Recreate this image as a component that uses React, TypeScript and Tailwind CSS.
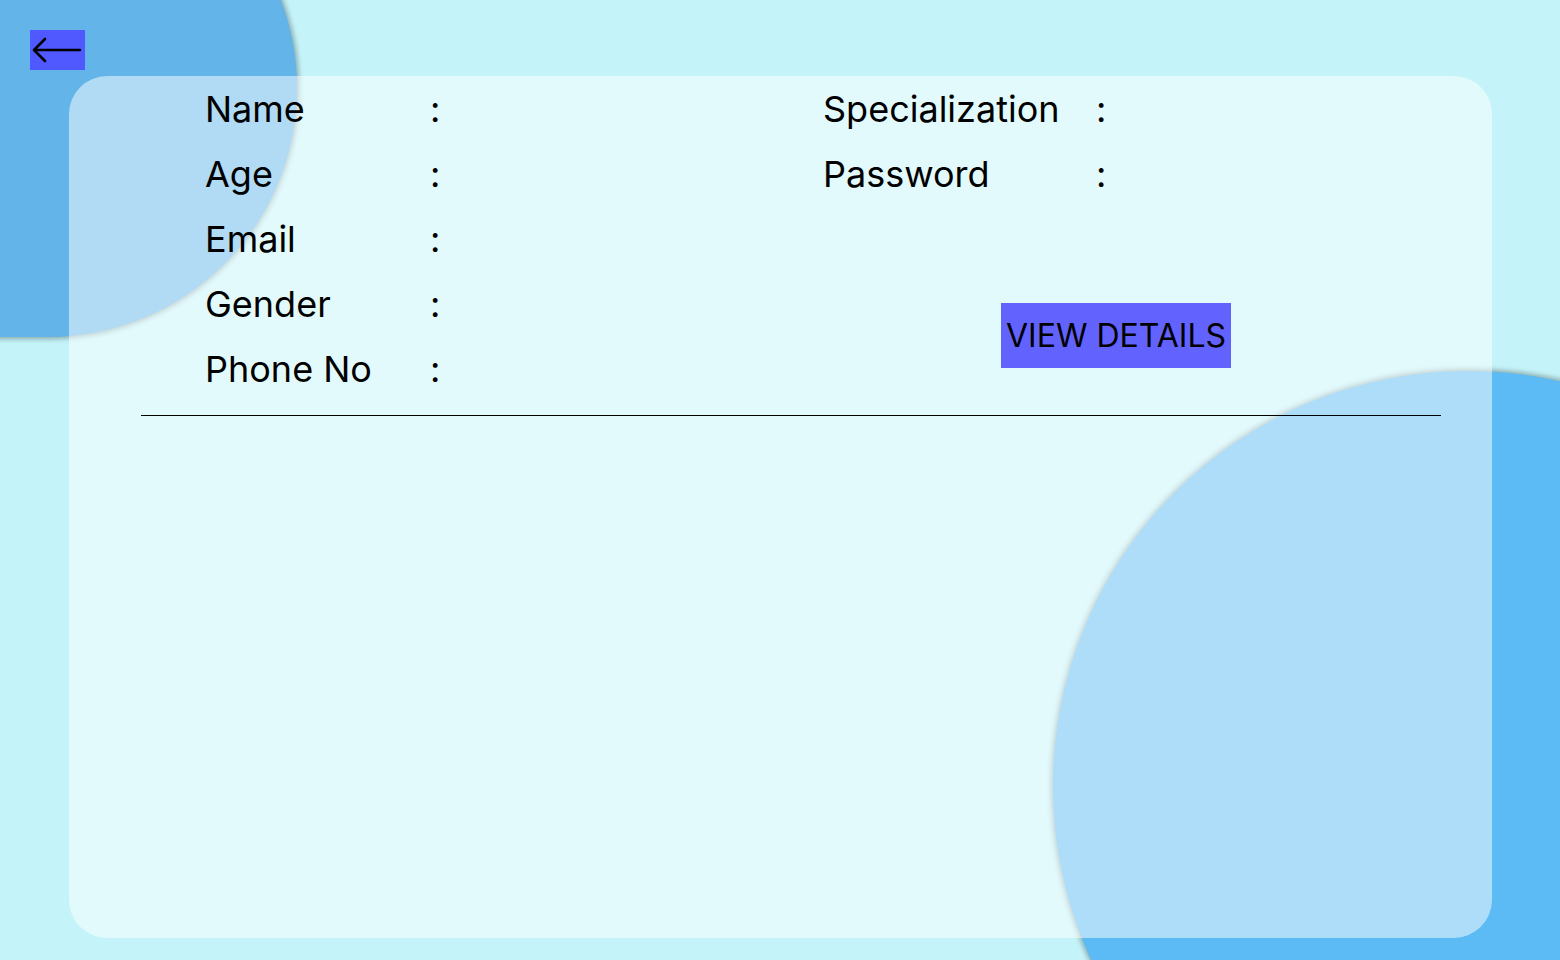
import React from "react";

const LEFT_FIELDS = ["Name", "Age", "Email", "Gender", "Phone No"];
const RIGHT_FIELDS = ["Specialization", "Password"];

function BackArrow() {
  return (
    <svg width="55" height="40" viewBox="0 0 55 40" fill="none" stroke="#000" strokeWidth="2.6" strokeLinecap="round">
      <line x1="5" y1="20" x2="50" y2="20" />
      <polyline points="15,9 4,20 15,31" strokeLinejoin="round" />
    </svg>
  );
}

function Field({ label, width }: { label: string; width: string }) {
  return (
    <div className="flex h-[65px] items-center">
      <span className={width}>{label}</span>
      <span>:</span>
    </div>
  );
}

export default function App() {
  return (
    <div
      className="relative h-[960px] w-full overflow-hidden bg-[#c4f4f9] text-black"
      style={{ fontFamily: "Inter, 'Noto Sans', sans-serif" }}
    >
      {/* background blobs */}
      <div className="absolute -left-[297px] -top-[161px] h-[498px] w-[594px] rounded-full bg-[#62b4e9] shadow-[0_0_5px_2px_rgba(0,0,0,0.3)]" />
      <div className="absolute left-[1053px] top-[371px] h-[830px] w-[830px] rounded-full bg-[#5cbaf5] shadow-[0_0_5px_2px_rgba(0,0,0,0.3)]" />

      <div className="relative flex flex-col px-[30px] pt-[30px]">
        <button type="button" className="flex h-[40px] w-[55px] items-center justify-center bg-[#5058ff]">
          <BackArrow />
        </button>

        <section className="ml-[39px] mt-[6px] h-[862px] w-[1423px] rounded-[38px] bg-white/50">
          <div className="flex text-[36px] leading-none">
            <div className="ml-[136px] w-[618px]">
              {LEFT_FIELDS.map((f) => (
                <Field key={f} label={f} width="w-[225px]" />
              ))}
            </div>
            <div className="flex flex-col">
              {RIGHT_FIELDS.map((f) => (
                <Field key={f} label={f} width="w-[273px]" />
              ))}
              <button
                type="button"
                className="ml-[178px] mt-[97px] flex h-[65px] w-[230px] items-center justify-center bg-[#6262ff] text-[32px] leading-none"
              >
                VIEW DETAILS
              </button>
            </div>
          </div>
          <div className="ml-[72px] mt-[14px] h-px w-[1300px] bg-black" />
        </section>
      </div>
    </div>
  );
}
